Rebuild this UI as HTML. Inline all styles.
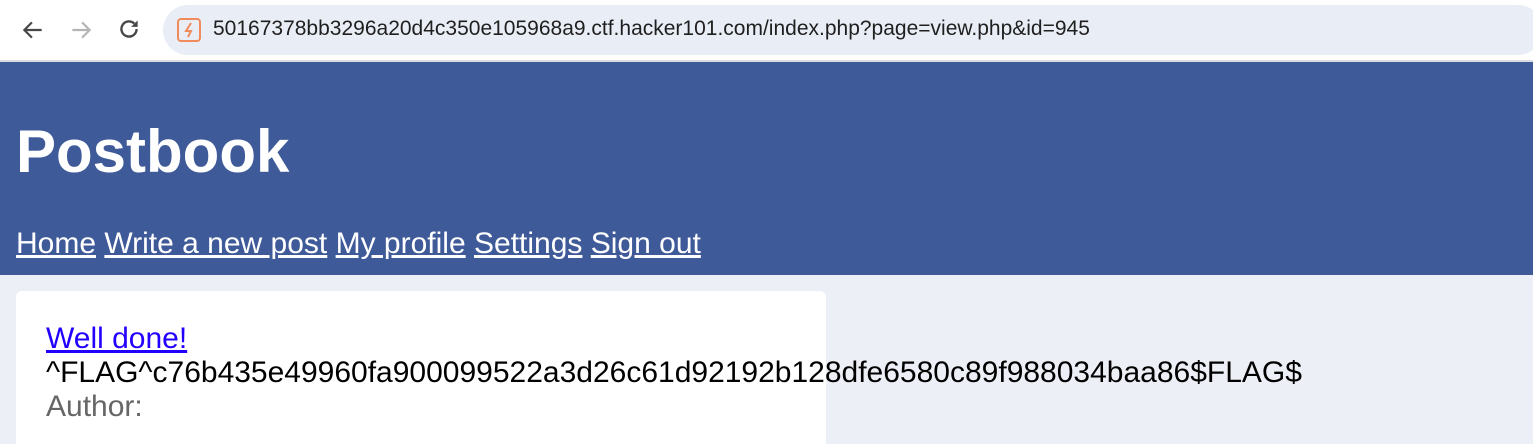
<!DOCTYPE html>
<html><head><meta charset="utf-8"><style>
*{margin:0;padding:0;box-sizing:border-box}
html,body{width:1533px;height:444px;overflow:hidden}
body{background:#eceff5;font-family:"Liberation Sans",Arial,sans-serif;position:relative}
.bar{position:absolute;left:0;top:0;width:1533px;height:62px;background:#fff;border-bottom:2px solid #dadce0}
.pill{position:absolute;left:163px;top:5px;width:1380px;height:50px;border-radius:25px;background:#e9eef6}
.url{position:absolute;left:213px;top:17px;font-size:21px;color:#1f1f1f;white-space:nowrap}
.hdr{position:absolute;left:0;top:62px;width:1533px;height:213px;background:#3f5a99;color:#fff}
.hdr h1{position:absolute;left:16px;top:55px;font-size:60px;font-weight:bold;line-height:70px}
.nav{position:absolute;left:16px;top:165px;font-size:30px;white-space:nowrap}
.nav a{color:#fff;text-decoration:underline}
.card{position:absolute;left:16px;top:291px;width:810px;height:170px;background:#fff;border-radius:6px}
.txt{position:absolute;left:46px;top:322px;font-size:30px;line-height:34px;white-space:nowrap}
.txt a{color:#2200ff}
</style></head><body>
<div class="bar">
<svg style="position:absolute;left:20px;top:17px" width="26" height="26" viewBox="0 0 24 24"><path d="M20 12H5M11 5l-7 7 7 7" fill="none" stroke="#474747" stroke-width="2"/></svg>
<svg style="position:absolute;left:68px;top:17px" width="26" height="26" viewBox="0 0 24 24"><path d="M4 12h15M13 5l7 7-7 7" fill="none" stroke="#b5b5b5" stroke-width="2"/></svg>
<svg style="position:absolute;left:116px;top:16px" width="26" height="26" viewBox="0 0 24 24"><path d="M19 12a7 7 0 1 1-2.1-5" fill="none" stroke="#474747" stroke-width="2.2"/><path d="M20 4v6h-6z" fill="#474747"/></svg>
<div class="pill"></div>
<svg style="position:absolute;left:176px;top:17px" width="26" height="26" viewBox="0 0 26 26"><rect x="2" y="2" width="22" height="22" rx="3" fill="none" stroke="#f28b5b" stroke-width="2"/><path d="M15 6l-5 8h5l-3 6" fill="none" stroke="#f28b5b" stroke-width="2"/></svg>
<div class="url">50167378bb3296a20d4c350e105968a9.ctf.hacker101.com/index.php?page=view.php&amp;id=945</div>
</div>
<div class="hdr"><h1>Postbook</h1>
<div class="nav"><a>Home</a> <a>Write a new post</a> <a>My profile</a> <a>Settings</a> <a>Sign out</a></div></div>
<div class="card"></div>
<div class="txt"><a href="#">Well done!</a><br>^FLAG^c76b435e49960fa900099522a3d26c61d92192b128dfe6580c89f988034baa86$FLAG$<br><span style="color:#666">Author:</span></div>
</body></html>
